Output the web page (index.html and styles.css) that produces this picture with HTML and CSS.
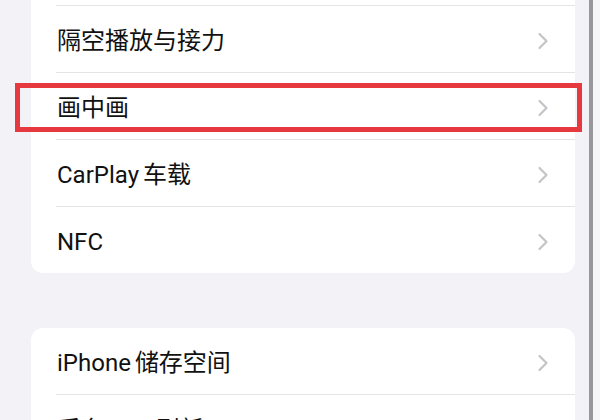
FILE: index.html
```html
<!DOCTYPE html>
<html lang="zh-CN">
<head>
<meta charset="utf-8">
<title>设置</title>
<link rel="stylesheet" href="styles.css">
</head>
<body>
<div class="screen">
  <div class="content">
    <div class="card card-top">
      <div class="row"><div class="row-inner"><span class="label">隔空播放与接力</span><svg class="chev" viewBox="0 0 12 18"><path d="M2.5 2 L9.5 9 L2.5 16"/></svg></div></div>
      <div class="row highlighted"><div class="row-inner"><span class="label">画中画</span><svg class="chev" viewBox="0 0 12 18"><path d="M2.5 2 L9.5 9 L2.5 16"/></svg></div><div class="mark"></div></div>
      <div class="row"><div class="row-inner"><span class="label">CarPlay<span class="gap"></span>车载</span><svg class="chev" viewBox="0 0 12 18"><path d="M2.5 2 L9.5 9 L2.5 16"/></svg></div></div>
      <div class="row"><div class="row-inner"><span class="label">NFC</span><svg class="chev" viewBox="0 0 12 18"><path d="M2.5 2 L9.5 9 L2.5 16"/></svg></div></div>
    </div>
    <div class="card card-second">
      <div class="row first"><div class="row-inner"><span class="label">iPhone<span class="gap"></span>储存空间</span><svg class="chev" viewBox="0 0 12 18"><path d="M2.5 2 L9.5 9 L2.5 16"/></svg></div></div>
      <div class="row"><div class="row-inner"><span class="label">后台<span class="gap"></span>App<span class="gap"></span>刷新</span><svg class="chev" viewBox="0 0 12 18"><path d="M2.5 2 L9.5 9 L2.5 16"/></svg></div></div>
    </div>
  </div>
  <div class="scrollbar"></div>
  <div class="edge"></div>
</div>
</body>
</html>
```
FILE: styles.css
```css
html, body {
  margin: 0;
  padding: 0;
  height: 420px;
  overflow: hidden;
  background: #f2f2f7;
}

.screen {
  display: flex;
  height: 420px;
  font-family: Roboto, "Noto Sans CJK SC", sans-serif;
  color: #111;
}

.content {
  width: 544px;
  padding: 0 14px 0 31px;
  flex: none;
}

.scrollbar {
  width: 4px;
  flex: none;
  background: #97979c;
}

.edge {
  flex: 1;
  background: #f6f6f9;
}

.card {
  background: #fff;
  border-radius: 12px;
}

.card-top {
  border-radius: 0 0 12px 12px;
  padding-top: 5px;
}

.card-second {
  margin-top: 55px;
}

.row {
  position: relative;
  padding-left: 25px;
}

.row-inner {
  display: flex;
  align-items: center;
  justify-content: space-between;
  height: 66px;
  border-top: 1px solid #e4e4e8;
  padding-right: 26px;
}

.row.first .row-inner {
  border-top: none;
}

.label {
  font-size: 24px;
  line-height: 30px;
  padding-top: 4px;
  padding-left: 1px;
  white-space: nowrap;
}

.gap {
  display: inline-block;
  width: 4px;
}

.chev {
  width: 12px;
  height: 18px;
  margin-top: 3px;
}

.chev path {
  fill: none;
  stroke: #c4c4c8;
  stroke-width: 2.2;
  stroke-linecap: round;
  stroke-linejoin: round;
}

.mark {
  position: absolute;
  left: -16px;
  right: -7px;
  top: 11px;
  bottom: 7px;
  border: 5px solid #e6383f;
}
```
